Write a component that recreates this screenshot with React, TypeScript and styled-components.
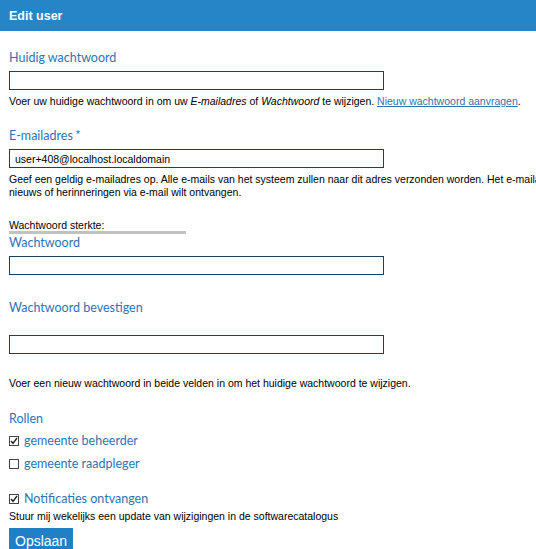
import React from "react";
import styled, { createGlobalStyle } from "styled-components";

const Global = createGlobalStyle`
  html, body { margin: 0; padding: 0; background: #fff; }
  body { font-family: "Liberation Sans", Arial, sans-serif; font-size: 11px; color: #000; overflow: hidden; }
  * { box-sizing: border-box; }
`;

const Page = styled.div`
  width: 536px;
  height: 549px;
  overflow: hidden;
`;

const Header = styled.div`
  height: 31px;
  background: #2585c6;
  color: #fff;
  font-family: "Liberation Sans", Arial, sans-serif;
  font-weight: bold;
  font-size: 12.5px;
  display: flex;
  align-items: center;
  padding: 0 9px;
`;

const Form = styled.form`
  display: flex;
  flex-direction: column;
  padding: 19px 9px 0;
  white-space: nowrap;
`;

const Field = styled.div<{ $mb?: number; $mt?: number }>`
  display: flex;
  flex-direction: column;
  margin-top: ${(p) => p.$mt ?? 0}px;
  margin-bottom: ${(p) => p.$mb ?? 0}px;
`;

const Label = styled.label<{ $mb?: number }>`
  font-family: Lato, "Open Sans", sans-serif;
  font-size: 12.5px;
  color: #2e73b5;
  line-height: 16px;
  margin-bottom: ${(p) => p.$mb ?? 5}px;
`;

const Req = styled.span`
  color: #2e73b5;
  font-family: "Liberation Sans", Arial, sans-serif;
  font-size: 11px;
  position: relative;
  top: -2px;
  margin-left: 3px;
`;

const Input = styled.input`
  width: 375px;
  height: 19px;
  border: 1px solid #1d3f5c;
  padding: 0 5px;
  font-family: "Liberation Sans", Arial, sans-serif;
  font-size: 10.5px;
  color: #000;
  outline: none;
`;

const Help = styled.div<{ $mt?: number }>`
  font-family: "Liberation Sans", Arial, sans-serif;
  font-size: 10.5px;
  line-height: 13px;
  margin-top: ${(p) => p.$mt ?? 5}px;
  color: #000;
`;

const Link = styled.a`
  color: #2e73b5;
  text-decoration: underline;
`;

const Strength = styled.div`
  display: flex;
  flex-direction: column;
  font-family: "Liberation Sans", Arial, sans-serif;
  font-size: 10.5px;
  line-height: 11px;
`;

const StrengthBar = styled.div`
  width: 177px;
  height: 3px;
  background: #c2c2c2;
  margin-bottom: 1px;
`;

const CheckRow = styled.label<{ $mb?: number }>`
  display: flex;
  align-items: center;
  gap: 5px;
  font-family: Lato, "Open Sans", sans-serif;
  font-size: 12.5px;
  color: #2e73b5;
  line-height: 16px;
  margin-bottom: ${(p) => p.$mb ?? 0}px;
`;

const Box = styled.span`
  width: 10px;
  height: 10px;
  border: 1px solid #444;
  background: #fff;
  display: inline-flex;
  align-items: center;
  justify-content: center;
  flex: none;
`;

const Button = styled.button`
  align-self: flex-start;
  background: #1f80c6;
  color: #fff;
  border: none;
  font-family: "Liberation Sans", Arial, sans-serif;
  font-size: 14px;
  height: 24px;
  padding: 2px 6px 0;
  margin-top: 5px;
`;

function Check({ checked }: { checked: boolean }) {
  return (
    <Box>
      {checked && (
        <svg width="8" height="8" viewBox="0 0 8 8">
          <path d="M1 4 L3 6.3 L7 1" fill="none" stroke="#222" strokeWidth="1.4" />
        </svg>
      )}
    </Box>
  );
}

export default function App() {
  return (
    <Page>
      <Global />
      <Header>Edit user</Header>
      <Form>
        <Field $mb={20}>
          <Label>Huidig wachtwoord</Label>
          <Input type="password" />
          <Help>
            Voer uw huidige wachtwoord in om uw <i>E-mailadres</i> of <i>Wachtwoord</i> te wijzigen.{" "}
            <Link href="#">Nieuw wachtwoord aanvragen</Link>.
          </Help>
        </Field>
        <Field $mb={21}>
          <Label>
            E-mailadres<Req>*</Req>
          </Label>
          <Input defaultValue="user+408@localhost.localdomain" />
          <Help>
            Geef een geldig e-mailadres op. Alle e-mails van het systeem zullen naar dit adres verzonden worden. Het e-mailadres wordt niet openbaar gemaakt en zal enkel gebruikt worden als u een nieuw wachtwoord wenst aan te vragen of als u
            <br />
            nieuws of herinneringen via e-mail wilt ontvangen.
          </Help>
        </Field>
        <Strength>
          Wachtwoord sterkte:
          <StrengthBar />
        </Strength>
        <Field $mb={25}>
          <Label>Wachtwoord</Label>
          <Input type="password" />
        </Field>
        <Field $mb={23}>
          <Label $mb={19}>Wachtwoord bevestigen</Label>
          <Input type="password" />
        </Field>
        <Help $mt={0}>Voer een nieuw wachtwoord in beide velden in om het huidige wachtwoord te wijzigen.</Help>
        <Field $mt={21}>
          <Label $mb={6}>Rollen</Label>
          <CheckRow $mb={7}>
            <Check checked />
            gemeente beheerder
          </CheckRow>
          <CheckRow $mb={19}>
            <Check checked={false} />
            gemeente raadpleger
          </CheckRow>
          <CheckRow $mb={3}>
            <Check checked />
            Notificaties ontvangen
          </CheckRow>
          <Help $mt={0}>Stuur mij wekelijks een update van wijzigingen in de softwarecatalogus</Help>
        </Field>
        <Button type="button">Opslaan</Button>
      </Form>
    </Page>
  );
}
